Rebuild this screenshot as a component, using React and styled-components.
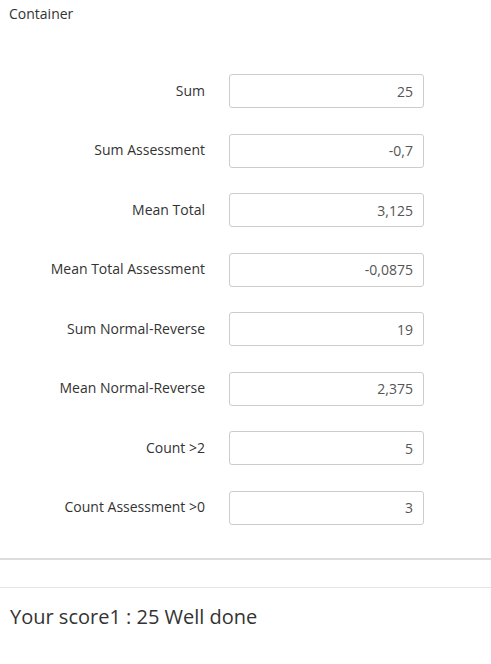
import React from 'react';
import styled, { createGlobalStyle } from 'styled-components';

const GlobalStyle = createGlobalStyle`
  body {
    margin: 0;
    background: #fff;
    font-family: 'Open Sans', 'Liberation Sans', sans-serif;
    color: #333;
  }
`;

const Page = styled.div`
  display: flex;
  flex-direction: column;
`;

const Caption = styled.div`
  padding: 5px 9px 0;
  font-size: 14px;
  line-height: 18px;
`;

const Form = styled.div`
  display: grid;
  grid-template-columns: 205px 195px;
  column-gap: 24px;
  row-gap: 25.5px;
  align-items: center;
  padding: 51px 0 0;
`;

const Label = styled.label`
  text-align: right;
  font-size: 14px;
  line-height: 18px;
  margin-top: -1px;
`;

const Field = styled.input`
  box-sizing: border-box;
  height: 34px;
  width: 100%;
  border: 1px solid #ccc;
  border-radius: 3px;
  padding: 0 10px;
  text-align: right;
  font-family: inherit;
  font-size: 14px;
  color: #555;
  background: #fff;
  outline: none;
`;

const Divider = styled.hr`
  margin: 33px 0 0;
  border: 0;
  border-top: 2px solid #ddd;
`;

const Footer = styled.div`
  margin-top: 27px;
  border-top: 1px solid #e5e5e5;
  padding: 15px 10px;
  font-size: 20px;
  line-height: 28px;
`;

const rows = [
  ['Sum', '25'],
  ['Sum Assessment', '-0,7'],
  ['Mean Total', '3,125'],
  ['Mean Total Assessment', '-0,0875'],
  ['Sum Normal-Reverse', '19'],
  ['Mean Normal-Reverse', '2,375'],
  ['Count >2', '5'],
  ['Count Assessment >0', '3'],
];

export default function App() {
  return (
    <Page>
      <GlobalStyle />
      <Caption>Container</Caption>
      <Form>
        {rows.map(([label, value]) => (
          <React.Fragment key={label}>
            <Label>{label}</Label>
            <Field value={value} readOnly />
          </React.Fragment>
        ))}
      </Form>
      <Divider />
      <Footer>Your score1 : 25 Well done</Footer>
    </Page>
  );
}
